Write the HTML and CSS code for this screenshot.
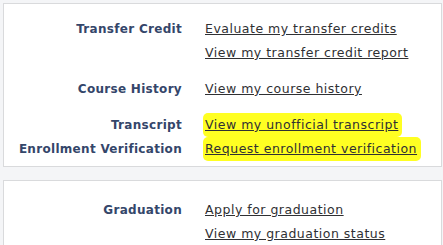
FILE: index.html
```html
<!DOCTYPE html>
<html>
<head>
<meta charset="utf-8">
<link rel="stylesheet" href="styles.css">
</head>
<body>
<div class="page">
  <div class="card card-top">
    <div class="group">
      <div class="label">Transfer Credit</div>
      <div class="links">
        <a href="#">Evaluate my transfer credits</a>
        <a href="#">View my transfer credit report</a>
      </div>
    </div>
    <div class="group">
      <div class="label">Course History</div>
      <div class="links">
        <a href="#">View my course history</a>
      </div>
    </div>
    <div class="group">
      <div class="label">Transcript</div>
      <div class="links">
        <a href="#" class="hl">View my unofficial transcript</a>
      </div>
    </div>
    <div class="group tight">
      <div class="label">Enrollment Verification</div>
      <div class="links">
        <a href="#" class="hl">Request enrollment verification</a>
      </div>
    </div>
  </div>
  <div class="card card-bottom">
    <div class="group">
      <div class="label">Graduation</div>
      <div class="links">
        <a href="#">Apply for graduation</a>
        <a href="#">View my graduation status</a>
      </div>
    </div>
  </div>
</div>
</body>
</html>
```

FILE: styles.css
```css
html, body {
  margin: 0;
  padding: 0;
}
body {
  background: #f4f5f7;
  font-family: "DejaVu Sans", Verdana, sans-serif;
  width: 443px;
  height: 245px;
  overflow: hidden;
}
.page {
  padding: 3px 1px 0 3px;
  display: flex;
  flex-direction: column;
  gap: 13px;
}
.card {
  background: #ffffff;
  border: 1px solid #d9dadc;
}
.card-top {
  padding: 13px 0 5px;
}
.card-bottom {
  padding: 17px 0 0;
  border-bottom: none;
}
.group {
  display: grid;
  grid-template-columns: 178px 1fr;
  column-gap: 23px;
  margin-top: 12px;
}
.group:first-child,
.group.tight {
  margin-top: 0;
}
.label {
  text-align: right;
  font-weight: bold;
  font-size: 12px;
  letter-spacing: 0.3px;
  line-height: 24px;
  color: #34466a;
}
.links {
  display: flex;
  flex-direction: column;
  align-items: flex-start;
}
.links a {
  font-size: 12.5px;
  line-height: 24px;
  color: #2f3033;
  text-decoration: underline;
  letter-spacing: 0.5px;
}
.links a.hl {
  background: #ffff22;
  border-radius: 5px;
  padding: 0 4px 0 2px;
  margin-left: -2px;
  line-height: 24px;
}
```
